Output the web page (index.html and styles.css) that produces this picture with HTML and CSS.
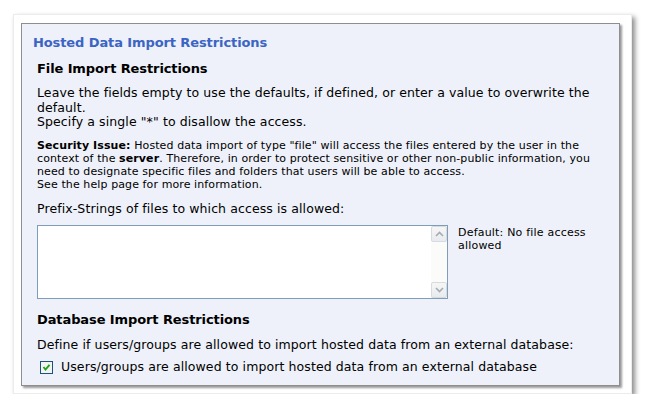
FILE: index.html
```html
<!DOCTYPE html>
<html>
<head>
<meta charset="utf-8">
<link rel="stylesheet" href="styles.css">
</head>
<body>
<div class="frame">
  <div class="panel">
    <h1 class="title">Hosted Data Import Restrictions</h1>
    <div class="content">
      <h2 class="subtitle">File Import Restrictions</h2>
      <p class="text">Leave the fields empty to use the defaults, if defined, or enter a value to overwrite the default.<br>Specify a single "*" to disallow the access.</p>
      <p class="small"><b>Security Issue:</b> Hosted data import of type "file" will access the files entered by the user in the context of the <b>server</b>. Therefore, in order to protect sensitive or other non-public information, you need to designate specific files and folders that users will be able to access.<br>See the help page for more information.</p>
      <p class="text label">Prefix-Strings of files to which access is allowed:</p>
      <div class="field-row">
        <div class="textbox">
          <div class="textbox-area"></div>
          <div class="scrollbar">
            <div class="sb-btn"><svg width="9" height="6" viewBox="0 0 9 6"><path d="M1 5 L4.5 1.5 L8 5" fill="none" stroke="#a4acb4" stroke-width="1.6"/></svg></div>
            <div class="sb-track"></div>
            <div class="sb-btn"><svg width="9" height="6" viewBox="0 0 9 6"><path d="M1 1 L4.5 4.5 L8 1" fill="none" stroke="#a4acb4" stroke-width="1.6"/></svg></div>
          </div>
        </div>
        <div class="hint">Default: No file access allowed</div>
      </div>
      <h2 class="subtitle db">Database Import Restrictions</h2>
      <p class="text define">Define if users/groups are allowed to import hosted data from an external database:</p>
      <div class="check-row">
        <span class="checkbox"><svg width="13" height="13" viewBox="0 0 13 13"><rect x="0.5" y="0.5" width="12" height="12" fill="#f4f4ef" stroke="#1c5180"/><path d="M3.5 6 L5.5 8.5 L9.5 3.8" fill="none" stroke="#21a121" stroke-width="1.9"/></svg></span>
        <span class="text">Users/groups are allowed to import hosted data from an external database</span>
      </div>
    </div>
  </div>
</div>
</body>
</html>
```
FILE: styles.css
```css
html, body {
  margin: 0;
  padding: 0;
  background: #ffffff;
}
body {
  font-family: "DejaVu Sans", Verdana, sans-serif;
  color: #000;
  padding: 14px 0 0 13px;
}
.frame {
  width: 619px;
  height: 380px;
  box-sizing: border-box;
  background: #fff;
  border: 1px solid #ececec;
  box-shadow: 3px 3px 5px rgba(0,0,0,0.45);
  padding: 8px 0 0 7px;
}
.panel {
  width: 599px;
  height: 363px;
  box-sizing: border-box;
  background: #eef1f9;
  border: 1px solid #8e8e8e;
  box-shadow: 2px 2px 2px rgba(0,0,0,0.4);
  padding: 11px 0 0 11px;
}
.title {
  margin: 0;
  font-size: 13px;
  line-height: 16px;
  font-weight: bold;
  color: #3b64c4;
  letter-spacing: -0.1px;
}
.content {
  padding-left: 4px;
  padding-right: 10px;
}
.subtitle {
  margin: 10px 0 0;
  font-size: 13px;
  line-height: 16px;
  font-weight: bold;
  letter-spacing: -0.1px;
}
.text {
  font-size: 12.5px;
  line-height: 14.5px;
  letter-spacing: 0.1px;
}
p.text {
  margin: 9px 0 0;
}
.small {
  margin: 9px 0 0;
  font-size: 11px;
  line-height: 13.2px;
  letter-spacing: 0.1px;
}
p.label {
  margin-top: 11px;
}
.field-row {
  display: flex;
  margin-top: 8px;
}
.textbox {
  width: 411px;
  height: 74px;
  box-sizing: border-box;
  border: 1px solid #7f9db9;
  background: #fff;
  display: flex;
}
.textbox-area {
  flex: 1;
}
.scrollbar {
  width: 16px;
  display: flex;
  flex-direction: column;
  background: #fbfbf9;
}
.sb-btn {
  height: 16px;
  box-sizing: border-box;
  border: 1px solid #d4dbe3;
  border-radius: 2px;
  background: linear-gradient(#f6f6f4, #e8ebee);
  display: flex;
  align-items: center;
  justify-content: center;
}
.sb-track {
  flex: 1;
}
.hint {
  margin-left: 10px;
  font-size: 11px;
  line-height: 13px;
  letter-spacing: 0.2px;
  width: 140px;
  padding-top: 1px;
}
.subtitle.db {
  margin-top: 13px;
}
p.define {
  margin-top: 10px;
}
.check-row {
  display: flex;
  align-items: center;
  margin-top: 8px;
  padding-left: 3px;
}
.checkbox {
  display: flex;
  width: 13px;
  height: 13px;
  margin-right: 8px;
}
```
